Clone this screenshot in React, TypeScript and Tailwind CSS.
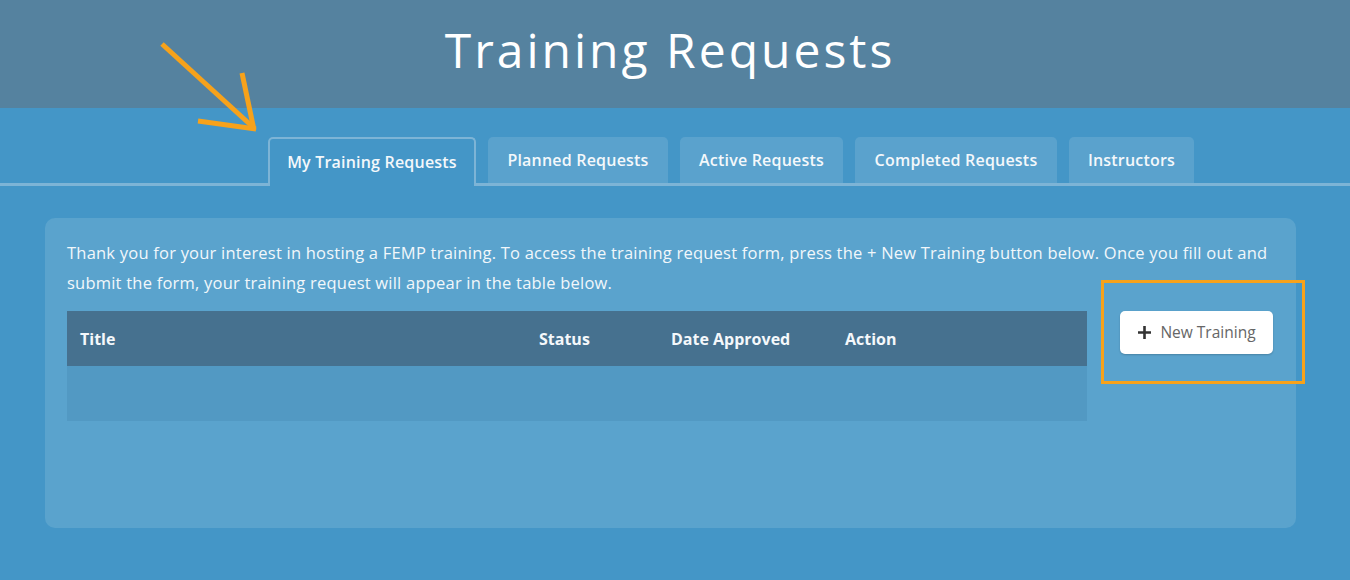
import React from "react";

const tabs = [
  { label: "My Training Requests", width: "w-[208px]", active: true },
  { label: "Planned Requests", width: "w-[180px]", active: false },
  { label: "Active Requests", width: "w-[163px]", active: false },
  { label: "Completed Requests", width: "w-[202px]", active: false },
  { label: "Instructors", width: "w-[125px]", active: false },
];

export default function App() {
  return (
    <div
      className="relative min-h-[580px] w-[1350px] overflow-hidden bg-[#4496c7] text-white"
      style={{ fontFamily: "'Open Sans', Lato, sans-serif" }}
    >
      {/* Page title band */}
      <header className="flex h-[108px] items-center justify-center bg-[#55829f] pb-[8px] pr-[10px]">
        <h1 className="text-[48px] font-normal leading-none tracking-[3px] text-white">Training Requests</h1>
      </header>

      {/* Tabs */}
      <nav className="border-b-[3px] border-[#7db4d6] pt-[29px]">
        <ul className="flex gap-3 pl-[268px]">
          {tabs.map((tab) => (
            <li
              key={tab.label}
              className={
                tab.active
                  ? `${tab.width} -mb-[3px] flex h-[49px] items-center justify-center rounded-t-[5px] border-2 border-b-0 border-[#7db4d6] bg-[#4496c7] pb-[2px] text-[16px] font-semibold tracking-[0.2px] text-[#f4f8fb]`
                  : `${tab.width} flex h-[46px] items-center justify-center rounded-t-[5px] bg-[#5aa2cd] text-[16px] font-semibold tracking-[0.2px] text-[#f4f8fb]`
              }
            >
              {tab.label}
            </li>
          ))}
        </ul>
      </nav>

      {/* Content panel */}
      <section className="ml-[45px] mt-[32px] h-[310px] w-[1251px] rounded-[10px] bg-[#5aa3cd] px-[22px] pt-[20px]">
        <p className="w-[1215px] text-[16.5px] leading-[30px] tracking-[0.22px] text-[#f1f7fb]">
          Thank you for your interest in hosting a FEMP training. To access the training request form, press the + New
          Training button below. Once you fill out and submit the form, your training request will appear in the table
          below.
        </p>

        <div className="mt-[13px] flex items-start gap-[33px]">
          <div className="w-[1020px]">
            <div className="grid h-[55px] grid-cols-[459px_132px_174px_1fr] items-center bg-[#46718f] pl-[13px] text-[16px] font-bold text-[#f4f8fb]">
              <span>Title</span>
              <span>Status</span>
              <span>Date Approved</span>
              <span>Action</span>
            </div>
            <div className="h-[55px] bg-[#5299c3]" />
          </div>

          <button className="flex h-[43px] w-[153px] items-center justify-center gap-[8px] rounded-[5px] bg-white text-[15.5px] text-[#666] shadow-[0_1px_2px_rgba(0,0,0,0.2)]">
            <svg width="15" height="15" viewBox="0 0 15 15" className="text-[#333]">
              <path d="M7.5 1v13M1 7.5h13" stroke="currentColor" strokeWidth="2.6" />
            </svg>
            <span>New Training</span>
          </button>
        </div>
      </section>

      {/* Annotation: highlight box round the button */}
      <div className="absolute left-[1101px] top-[280px] h-[104px] w-[204px] border-[3px] border-[#f7a21b]" />

      {/* Annotation: arrow pointing at the active tab */}
      <svg className="absolute left-0 top-0" width="300" height="160" viewBox="0 0 300 160">
        <g stroke="#f7a21b" strokeWidth="5" fill="none" strokeLinecap="butt">
          <path d="M162 44 L254 128" />
          <path d="M242 73 L254 130" />
          <path d="M198 121 L256 129" />
        </g>
      </svg>
    </div>
  );
}
